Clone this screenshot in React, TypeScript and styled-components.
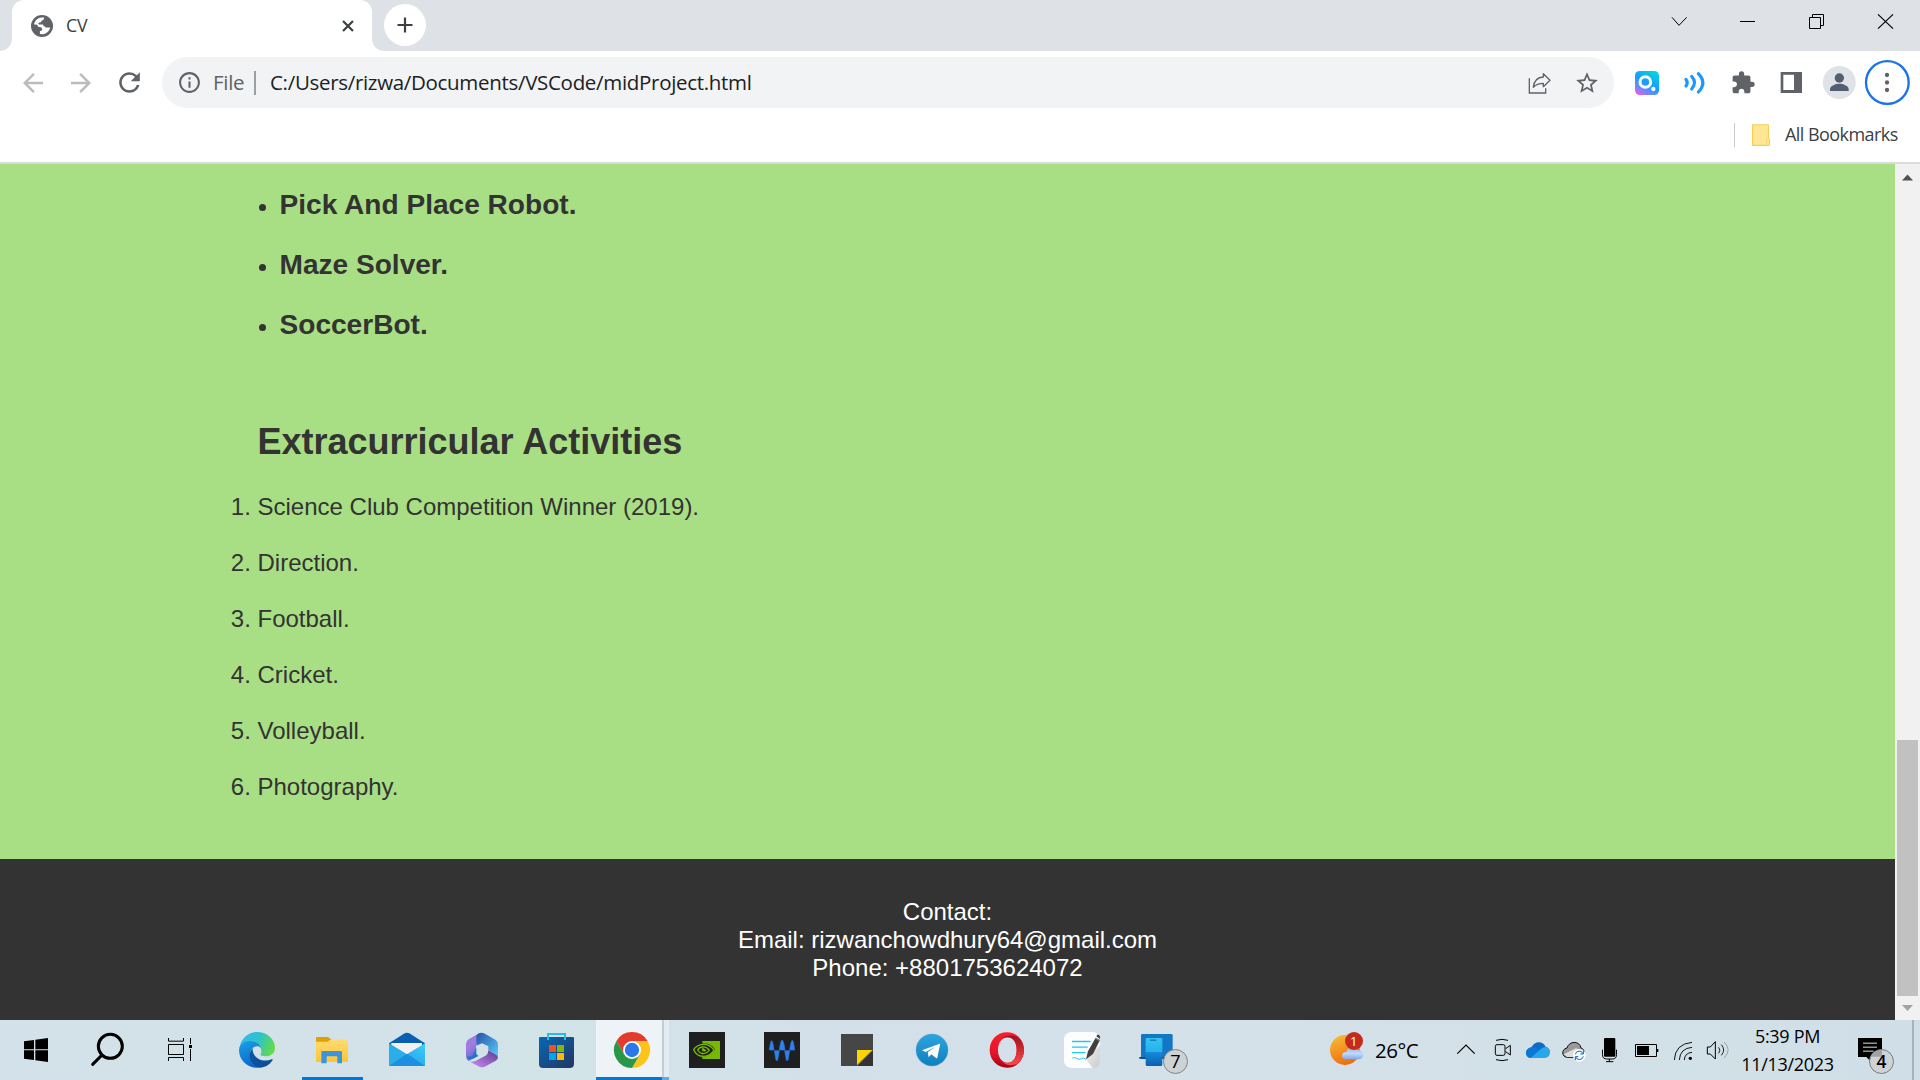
import React from "react";
import styled, { createGlobalStyle } from "styled-components";
import { MdArrowBack, MdArrowForward, MdRefresh, MdInfoOutline, MdStarBorder, MdExtension } from "react-icons/md";

const GlobalStyle = createGlobalStyle`
  * { box-sizing: border-box; }
  body { margin: 0; overflow: hidden; }
  svg { display: block; flex: none; }
`;

const ui = `"Open Sans", "Noto Sans", sans-serif`;

const Screen = styled.div`
  width: 1920px;
  height: 1080px;
  display: flex;
  flex-direction: column;
  overflow: hidden;
  background: #fff;
`;

/* ---------- browser chrome ---------- */

const TabStrip = styled.header`
  height: 51px;
  display: flex;
  background: #dee1e6;
  font-family: ${ui};
`;
const TabCorner = styled.div<{ $side: "left" | "right" }>`
  width: 12px;
  height: 51px;
  background: radial-gradient(circle at ${(p) => (p.$side === "left" ? "0 0" : "12px 0")}, #dee1e6 11.5px, #fff 12.3px) bottom / 12px 12px no-repeat;
`;
const Tab = styled.div`
  width: 360px;
  height: 51px;
  padding: 0 17px 0 19px;
  display: flex;
  align-items: center;
  background: #fff;
  border-radius: 12px 12px 0 0;
`;
const TabTitle = styled.span`
  flex: 1;
  margin-left: 13px;
  padding-bottom: 1px;
  font-size: 17.8px;
  letter-spacing: -0.1px;
  color: #3c4043;
`;
const NewTab = styled.div`
  width: 42px;
  height: 42px;
  margin-top: 4px;
  border-radius: 50%;
  background: #fff;
  display: flex;
  align-items: center;
  justify-content: center;
`;
const WindowButtons = styled.div`
  margin-left: auto;
  display: flex;
`;

const Toolbar = styled.div`
  height: 64px;
  padding: 6px 10px 7px 18px;
  display: flex;
  align-items: center;
  font-family: ${ui};
`;
const NavButton = styled.div<{ $dim?: boolean }>`
  width: 48px;
  display: flex;
  color: ${(p) => (p.$dim ? "#babcbe" : "#5f6368")};
`;
const Omnibox = styled.div`
  width: 1452px;
  height: 51px;
  padding: 0 14px 0 15px;
  display: flex;
  align-items: center;
  background: #f1f3f4;
  border-radius: 26px;
  color: #5f6368;
`;
const Scheme = styled.span`
  width: 41px;
  margin-left: 11px;
  padding-bottom: 2px;
  font-size: 20.5px;
  letter-spacing: -0.3px;
  white-space: nowrap;
`;
const Divider = styled.i<{ $color: string; $gap?: number; $width?: number }>`
  width: ${(p) => p.$width ?? 2}px;
  height: 24px;
  margin-right: ${(p) => p.$gap ?? 0}px;
  background: ${(p) => p.$color};
`;
const Address = styled.span`
  flex: 1;
  margin-left: 14px;
  padding-bottom: 2px;
  font-size: 20.5px;
  letter-spacing: -0.31px;
  color: #202124;
  white-space: nowrap;
`;
const OmniboxActions = styled.div`
  display: flex;
  align-items: center;
  gap: 22px;
`;
const Extensions = styled.div`
  width: 290px;
  margin: -6px 0 -7px auto;
`;
const BookmarkBar = styled.div`
  height: 49px;
  padding: 0 18px 8px 0;
  border-bottom: 2px solid #dadbdd;
  display: flex;
  align-items: center;
  justify-content: flex-end;
  font-family: ${ui};
`;
const BookmarkLabel = styled.span`
  width: 117px;
  margin-left: 14px;
  padding-bottom: 2px;
  font-size: 18px;
  letter-spacing: -0.55px;
  color: #3c4043;
  white-space: nowrap;
`;

/* ---------- page ---------- */

const Viewport = styled.div`
  height: 856px;
  display: flex;
`;
const Page = styled.main`
  width: 1895px;
  display: flex;
  flex-direction: column;
  background: #a9df84;
  color: #333;
  font-family: "Liberation Sans", Arial, sans-serif;
  font-size: 24px;
`;
const Resume = styled.section`
  height: 695px;
  padding: 25px 257.5px 0;
`;
const Projects = styled.ul`
  margin: 0;
  padding: 0 0 0 22px;
  list-style: disc;
`;
const Project = styled.li`
  height: 60px;
  line-height: 32px;
`;
const ProjectName = styled.h3`
  margin: 0;
  font-size: 28.08px;
  line-height: 32px;
`;
const Heading = styled.h2`
  margin: 52px 0 0;
  font-size: 36px;
  line-height: 42px;
`;
const Activities = styled.ol`
  margin: 30px 0 0;
  padding: 0;
`;
const Activity = styled.li`
  height: 56px;
  line-height: 28px;
`;
const Contact = styled.footer`
  height: 161px;
  padding-top: 39px;
  background: #333;
  color: #fff;
  text-align: center;
  line-height: 28px;
`;
const Scrollbar = styled.div`
  width: 25px;
  display: flex;
  flex-direction: column;
  align-items: center;
  background: #f1f1f1;
`;
const Thumb = styled.div`
  width: 21px;
  height: 256px;
  margin-top: auto;
  background: #c1c1c1;
`;

/* ---------- taskbar ---------- */

const Taskbar = styled.nav`
  height: 60px;
  display: flex;
  background: linear-gradient(90deg, #d3e1ea 0, #d3e2e9 20%, #d2e4e8 29%, #d3e0e9 42%, #d5e1e9 60%, #d0dfe7 100%);
  font-family: ${ui};
  color: #000;
`;
const SystemButtons = styled.div`
  width: 219px;
  display: flex;
`;
const AppSlot = styled.div<{ $state?: "open" | "active" }>`
  width: 75px;
  height: 60px;
  padding: 12px 0 0 20px;
  background: ${(p) =>
    p.$state === "active"
      ? "linear-gradient(#0078d7, #0078d7) 2px 57px / 66px 3px no-repeat, linear-gradient(#62abe3, #62abe3) 68px 57px / 7px 3px no-repeat, linear-gradient(90deg, transparent 2px, #edf3f7 2px, #edf3f7 68px, #c3cfd6 68px, #c3cfd6 70px, #e3ecf1 70px)"
      : p.$state === "open"
        ? "linear-gradient(#0078d7, #0078d7) 8px 57px / 61px 3px no-repeat"
        : "none"};
`;
const Weather = styled.div`
  margin-left: auto;
  width: 119px;
  display: flex;
`;
const Temperature = styled.span`
  margin-left: 10px;
  font-size: 20.5px;
  line-height: 61px;
  letter-spacing: -0.5px;
`;
const Clock = styled.div`
  width: 103px;
  margin-right: 1px;
  padding-top: 2px;
  text-align: center;
  font-size: 18px;
  line-height: 28px;
  letter-spacing: -0.3px;
  white-space: nowrap;
`;
const ShowDesktop = styled.div`
  width: 8px;
  border-left: 2px solid #a7b2b9;
`;

type IconProps = { w: number; h: number; box: string; children: React.ReactNode };
const Icon = ({ w, h, box, children }: IconProps) => (
  <svg width={w} height={h} viewBox={box} fill="none">{children}</svg>
);
const AppIcon = ({ children }: { children: React.ReactNode }) => (
  <svg width="36" height="36" viewBox="0 0 108 108" overflow="visible" fill="none">{children}</svg>
);

const Globe = () => (
  <Icon w={22} h={22} box="0 0 22 22">
    <circle cx="11" cy="11" r="11" fill="#5f6368" />
    <path d="M3 9.500C3.800 5.500 7 2.800 10.700 2.600h2.300c0 1.800-.4 2.500-1.800 2.900-.8.2-.7 1.200-1.400 1.700-.8.5-1.800.2-2.300.9-.5.8.1 1.600 1.100 1.500h2.600c1 0 1.400.6 1.500 1.600.9.1 1.700.4 1.800 1.300h4.700c-.7 3.600-3.600 6.300-7.200 6.700l-3.100-.1v-3.200c1.400.1 2.400-.4 2.300-1.600-.1-1.500-1.300-2.200-2.900-2.200-1.700 0-1.600-2.300-3.100-2.500z" fill="#fff" />
  </Icon>
);

const WindowControls = () => (
  <Icon w={260} h={51} box="540 0 780 153">
    <g stroke="#000" strokeWidth="3">
      <path d="M576 52l21 24 23-24" />
      <path d="M780 64.500h45" />
      <path d="M988.500 52.500h33v33h-33zM997.500 52v-8.500h33v33H1023" />
      <path d="M1194 43l45 43M1239 43l-45 43" strokeWidth="3.600" />
    </g>
  </Icon>
);

const ToolbarExtensions = () => (
  <Icon w={290} h={64} box="420 153 870 192">
    <defs>
      <linearGradient id="ext" x1=".8" y1="0" x2=".2" y2="1">
        <stop stopColor="#00d8dc" /><stop offset=".5" stopColor="#189cff" /><stop offset=".75" stopColor="#5f8dff" /><stop offset="1" stopColor="#e35cf5" />
      </linearGradient>
    </defs>
    <rect x="465" y="213" width="72" height="72" rx="14" fill="url(#ext)" />
    <circle cx="496" cy="246" r="16" stroke="#fff" strokeWidth="9" />
    <circle cx="520" cy="267" r="6.500" fill="#fff" />
    <g stroke="#1a98ff" strokeWidth="9.500" strokeLinecap="round">
      <path d="M618 238q7 10 0 20M635 229q17 18 0 38M655 221q27 28 0 55" />
    </g>
    <path d="M902 216h64v63h-64zM910 224v46h32v-46z" fillRule="evenodd" fill="#5f6368" />
    <circle cx="1078" cy="247.500" r="49.500" fill="#dfe2e7" />
    <circle cx="1078" cy="234" r="14" fill="#535e70" />
    <path d="M1050 273v-6c0-10 18-16 28-16s28 6 28 16v6z" fill="#535e70" />
    <circle cx="1222" cy="247.500" r="64" stroke="#1a73e8" strokeWidth="7" />
    <g fill="#5f6368"><circle cx="1221" cy="225" r="6.500" /><circle cx="1221" cy="247.500" r="6.500" /><circle cx="1221" cy="270" r="6.500" /></g>
    <g transform="translate(751.500 210.500) scale(3.150)" color="#5f6368"><MdExtension size={24} /></g>
  </Icon>
);

const ShareIcon = () => (
  <Icon w={24} h={24} box="144 213 72 72">
    <path d="M148 235v44h49v-14" stroke="#5f6368" strokeWidth="4" />
    <path d="M160 262c2-20 11-30 30-31v-10l20 20-20 19v-10c-13 0-22 3-30 12z" stroke="#5f6368" strokeWidth="4" strokeLinejoin="round" />
  </Icon>
);

const FolderIcon = () => (
  <Icon w={20} h={24} box="813 369 60 72">
    <path d="M816 373h48q3 0 3 3v40h3v18q0 4-4 4h-50z" fill="#f5cf55" />
    <path d="M819 376h45v38l-6 3v17h-39z" fill="#ffe695" />
    <path d="M860 434v-16q4-5 7 0v16z" fill="#ffe695" />
  </Icon>
);

const systemIcons = (
  <>
    <Icon w={72} h={60} box="0 30 216 180">
      <path d="M72 94l30-4v28H72zM106 89l38-5v34h-38zM72 121h30v29l-30-4zM106 121h38v35l-38-5z" fill="#000" />
    </Icon>
    <Icon w={72} h={60} box="216 30 216 180">
      <circle cx="331" cy="109" r="36" stroke="#000" strokeWidth="9" />
      <path d="M306 135l-28 28" stroke="#000" strokeWidth="9" strokeLinecap="round" />
    </Icon>
    <Icon w={72} h={60} box="432 30 216 180">
      <path d="M505.500 84v9.500h45V84M505.500 103.500h45v30h-45zM505.500 153v-10.500h45V153M571.500 84v18M571.500 117v36" stroke="#000" strokeWidth="3" />
      <path d="M567 105h9v9h-9z" fill="#000" />
    </Icon>
  </>
);

const EdgeIcon = () => (
  <AppIcon>
    <defs>
      <linearGradient id="eg1" x1="0" y1=".3" x2="1" y2=".6"><stop stopColor="#31b9f0" /><stop offset=".5" stopColor="#2fc3c9" /><stop offset="1" stopColor="#66dc42" /></linearGradient>
      <linearGradient id="eg2" x1=".2" y1="0" x2=".6" y2="1"><stop stopColor="#1b9de2" /><stop offset="1" stopColor="#0a63c9" /></linearGradient>
      <linearGradient id="eg3" x1="0" y1="0" x2="1" y2="1"><stop stopColor="#0d59a8" /><stop offset="1" stopColor="#0c4a94" /></linearGradient>
    </defs>
    <path d="M1 50C5 20 27 0 54 0c32 0 54 23 54 47 0 18-14 26-29 26-12 0-16-4-14-8 4-5 3-18-7-24C41 28 12 30 1 50z" fill="url(#eg1)" />
    <path d="M0 54C2 34 20 26 34 27c15 1 27 7 31 20-10-9-28-3-31 14-4 26 15 42 36 45C31 114 0 88 0 54z" fill="url(#eg2)" />
    <path d="M44 46c-18 14-17 45 11 59 21 5 36-6 46-21 1-2-1-3-3-2-27 11-56-4-57-29 0-3 1-5 3-7z" fill="url(#eg3)" />
  </AppIcon>
);

const ExplorerIcon = () => (
  <AppIcon>
    <defs><linearGradient id="fx" x1="0" y1="0" x2="0" y2="1"><stop stopColor="#ffdb72" /><stop offset="1" stopColor="#fdc534" /></linearGradient></defs>
    <path d="M6 18q0-3 3-3h31q3 0 6 3l6 5v10H6z" fill="#e0a000" />
    <path d="M6 29h34l12-7h46q4 0 4 4v60q0 4-4 4H10q-4 0-4-4z" fill="url(#fx)" />
    <path d="M22 94V61q0-4 4-4h54q4 0 4 4v33H70V75q0-2-2-2H40q-2 0-2 2v19z" fill="#3b94dc" />
  </AppIcon>
);

const MailIcon = () => (
  <AppIcon>
    <defs><linearGradient id="ml" x1="1" y1="0" x2="0" y2="1"><stop stopColor="#3fd0fa" /><stop offset="1" stopColor="#1c8ee0" /></linearGradient></defs>
    <path d="M0 34L47 4q7-4 14 0l47 30v30H0z" fill="#0a5fb0" />
    <path d="M7 33h92v14L58 70 7 44z" fill="#f2f2f2" />
    <path d="M0 34l54 33-54 35z" fill="#2badea" />
    <path d="M108 34v68H0l36-25z" fill="url(#ml)" />
    <path d="M0 102l54-37 54 37z" fill="#1b8fe2" />
  </AppIcon>
);

const OfficeIcon = () => (
  <AppIcon>
    <defs>
      <linearGradient id="of1" x1="0" y1="0" x2=".4" y2="1"><stop stopColor="#8c7fe0" /><stop offset=".5" stopColor="#a47ce0" /><stop offset="1" stopColor="#5a6ad4" /></linearGradient>
      <linearGradient id="of2" x1="0" y1="0" x2="1" y2="1"><stop stopColor="#2a4fa8" /><stop offset="1" stopColor="#55d0fa" /></linearGradient>
      <linearGradient id="of3" x1="1" y1="0" x2="0" y2="1"><stop stopColor="#593a91" /><stop offset="1" stopColor="#cf90f2" /></linearGradient>
    </defs>
    <path d="M47 3L14 22Q6 27 6 36v37q0 9 8 14l26-14q-4-3-4-8V40q0-5 4-8l12-8z" fill="url(#of1)" />
    <path d="M47 3q7-2 13 1l34 19q8 5 8 13v40q-3-8-10-11L73 54V43L54 34 37 41V16Q37 6 47 3z" fill="url(#of2)" />
    <path d="M73 55l20 11q9 5 9 11-1 6-8 10l-32 17q-8 4-16 0L18 89q15 1 22-5l27-14q6-4 6-15z" fill="url(#of3)" />
    <path d="M7 75q6 8 20 5l16-8-6-7V47L25 72z" fill="#2476bf" />
  </AppIcon>
);

const StoreIcon = () => (
  <AppIcon>
    <defs><linearGradient id="st" x1="0" y1="0" x2="1" y2="1"><stop stopColor="#0867b5" /><stop offset="1" stopColor="#24365f" /></linearGradient></defs>
    <path d="M0 19q0-4 4-4h97q4 0 4 4v76q0 13-13 13H12Q0 108 0 96z" fill="url(#st)" />
    <path d="M27 24V6h51v18" stroke="#25bdf0" strokeWidth="6" />
    <path d="M30 39h21v21H30z" fill="#f25022" /><path d="M54 39h21v21H54z" fill="#7fba00" />
    <path d="M30 63h21v21H30z" fill="#00a4ef" /><path d="M54 63h21v21H54z" fill="#ffb900" />
  </AppIcon>
);

const ChromeIcon = () => (
  <AppIcon>
    <path d="M7.200 27a54 54 0 0 1 93.600 0H54L30.600 67.500z" fill="#e33b2e" />
    <path d="M100.800 27A54 54 0 0 1 54 108l23.400-40.500L54 27z" fill="#fcc419" />
    <path d="M54 108A54 54 0 0 1 7.200 27l23.400 40.500h46.800z" fill="#279847" />
    <circle cx="54" cy="54" r="27" fill="#fff" />
    <circle cx="54" cy="54" r="21.500" fill="#2b79e8" />
  </AppIcon>
);

const NvidiaIcon = () => (
  <AppIcon>
    <path d="M0 0h108v108H0z" fill="#1f1f1f" />
    <path d="M40 27h53v54H40z" fill="#77b900" />
    <path d="M40 34c18-2 31 8 38 18-8 13-23 23-38 22z" fill="#1f1f1f" />
    <path d="M40 37c-13 2-22 9-26 16 5 12 17 20 30 20 14-1 24-8 31-19C66 42 54 35 40 37z" stroke="#77b900" strokeWidth="4" />
    <path d="M41 45c-8 1-13 5-15 9 4 7 11 11 18 11 8-1 13-5 17-10-5-7-13-11-20-10z" stroke="#77b900" strokeWidth="4" />
    <path d="M40 47c8 2 9 8 13 8-4 5-9 4-14 1z" fill="#77b900" />
  </AppIcon>
);

const WaveIcon = () => (
  <AppIcon>
    <path d="M0 0h108v108H0z" fill="#1f1f1f" />
    <path d="M16 54q7-56 14 0zM31 56h15l-5 29h-5zM46 54q8-60 17 0zM62 56h15l-5 29h-5zM77 54q8-58 15 0z" fill="#2b82f0" stroke="#2b74de" strokeWidth="2" />
  </AppIcon>
);

const NotesIcon = () => (
  <AppIcon>
    <path d="M6 6h96v48L54 102H6z" fill="#464646" /><path d="M54 102l48-48v48z" fill="#333" />
    <path d="M54 54h46l-46 45z" fill="#ffd500" />
  </AppIcon>
);

const TelegramIcon = () => (
  <AppIcon>
    <defs><linearGradient id="tg" x1="0" y1="0" x2="0" y2="1"><stop stopColor="#2ba5e0" /><stop offset="1" stopColor="#0f7fbd" /></linearGradient></defs>
    <circle cx="54" cy="54" r="48" fill="url(#tg)" stroke="#5c9bbd" strokeWidth="1.500" />
    <path d="M24 55l53-20q2 0 1 3l-8 39q-1 3-4 1L52 67l-8 9-3-15 24-17-30 16z" fill="#fff" />
  </AppIcon>
);

const OperaIcon = () => (
  <AppIcon>
    <defs>
      <linearGradient id="op1" x1="0" y1="0" x2="0" y2="1"><stop stopColor="#ff1b2d" /><stop offset=".6" stopColor="#e3152a" /><stop offset="1" stopColor="#a70014" /></linearGradient>
      <linearGradient id="op2" x1="0" y1="0" x2="0" y2="1"><stop stopColor="#a0101c" /><stop offset="1" stopColor="#ff4b4b" /></linearGradient>
    </defs>
    <path d="M54 1c29 0 51 23 51 53s-22 53-51 53S2 84 2 54 25 1 54 1zm2 15C38 16 27 33 27 54s11 38 29 38 27-17 27-38-9-38-27-38z" fillRule="evenodd" fill="url(#op1)" />
    <path d="M37 22c12-13 30-13 44-9 14 9 24 23 24 41 0 19-9 33-23 43-14 4-33 5-44-10 6 5 12 7 18 6 17-2 27-17 27-39S73 17 56 16c-7 0-13 2-19 6z" fill="url(#op2)" />
  </AppIcon>
);

const JournalIcon = () => (
  <AppIcon>
    <defs><linearGradient id="jn" x1="0" y1="0" x2="1" y2="1"><stop stopColor="#eee" /><stop offset="1" stopColor="#ccc" /></linearGradient></defs>
    <rect width="108" height="108" rx="22" fill="#fdfdfd" />
    <path d="M66 82l42-43v47q0 22-22 22z" fill="url(#jn)" />
    <path d="M24 28.500h56M24 45.500h47M24 62h40" stroke="#19c9f5" strokeWidth="4" />
    <path d="M25 78q7-3 13 1 7 6 14 1t14 2" stroke="#19c9f5" strokeWidth="3" />
    <path d="M66 82l6-24 23-41 13 7-21 42z" fill="#404040" /><path d="M97 13q3-8 8-4 5 4 3 12z" fill="#404040" />
    <path d="M93 18l14 9" stroke="#aaa" strokeWidth="2" />
  </AppIcon>
);

const PhoneIcon = () => (
  <AppIcon>
    <defs><linearGradient id="ph" x1="0" y1="0" x2="0" y2="1"><stop stopColor="#35c3f2" /><stop offset=".5" stopColor="#27b0ea" /><stop offset=".51" stopColor="#1689da" /><stop offset="1" stopColor="#0e5fae" /></linearGradient></defs>
    <path d="M10 6h87q4 0 4 4v65H6V10q0-4 4-4z" fill="#1378c4" /><path d="M0 75h104v6H5q-5 0-5-6z" fill="#0c4f94" />
    <rect x="20" y="18" width="50" height="84" rx="4" fill="url(#ph)" /><path d="M33 24.500h19" stroke="#1679b0" strokeWidth="4" />
    <circle cx="109.500" cy="88.500" r="36" fill="#cdd2d5" stroke="#7f8487" strokeWidth="3" />
    <text x="109.500" y="108" textAnchor="middle" fontFamily="Open Sans" fontSize="54" fontWeight="500" fill="#000">7</text>
  </AppIcon>
);

const WeatherIcon = () => (
  <Icon w={36} h={60} box="87 30 108 180">
    <defs>
      <linearGradient id="sun" x1=".2" y1="0" x2=".6" y2="1"><stop stopColor="#f5bd32" /><stop offset="1" stopColor="#f0690f" /></linearGradient>
      <linearGradient id="cl" x1="0" y1="0" x2="0" y2="1"><stop stopColor="#8bb4ee" /><stop offset=".5" stopColor="#c2daf9" /><stop offset="1" stopColor="#84a8e6" /></linearGradient>
    </defs>
    <circle cx="135" cy="120" r="45" fill="url(#sun)" />
    <path d="M139 148c-17 0-17-22 0-23 4-15 27-16 32-5 24-2 24 28 4 28z" fill="url(#cl)" />
    <circle cx="162" cy="93" r="27" fill="#c42b1c" />
    <text x="161" y="107" textAnchor="middle" fontFamily="Open Sans" fontSize="39" fill="#fff">1</text>
  </Icon>
);

const trayIcons = (
  <>
    <Icon w={36} h={60} box="444 30 108 180"><path d="M472 131l26-26 26 26" stroke="#000" strokeWidth="3.500" /></Icon>
    <Icon w={36} h={60} box="552 30 108 180">
      <rect x="586" y="104" width="29" height="32" rx="5" stroke="#000" strokeWidth="3" />
      <path d="M617 116l14-10v29l-14-10M588 91q18-6 36 0M588 149q18 6 36 0" stroke="#000" strokeWidth="3" />
    </Icon>
    <Icon w={36} h={60} box="660 30 108 180">
      <path d="M678 128q2-14 17-17c8-18 33-20 42-1q12 3 13 17z" fill="#0f6cc4" />
      <path d="M692 144c-18 0-20-28 0-31 7-2 14-1 21 4l20 10-16 17z" fill="#0a78d4" />
      <path d="M692 144l33-29q5-3 12-4c17 2 18 33-3 33z" fill="#28a8ea" />
    </Icon>
    <Icon w={36} h={60} box="768 30 108 180">
      <path d="M802 142c-17 0-19-25-1-28 6-22 38-23 42 0 13 3 14 27-5 28z" fill="#999" stroke="#111" strokeWidth="3" />
      <path d="M791 133l38-19 10 12-20 15h-17z" fill="#ddd" />
      <circle cx="838" cy="136" r="19" fill="#fff" />
      <path d="M826 133a12 12 0 0 1 23-2M850 139a12 12 0 0 1-23 2M850 122v10h-9M826 150v-10h9" stroke="#0b68c3" strokeWidth="3" />
    </Icon>
    <Icon w={36} h={60} box="-24 60 108 180">
      <rect x="12" y="114" width="34" height="56" rx="3" fill="#000" />
      <path d="M7.500 149v15q0 13 13 13h17q12 0 12-13v-15M28 177v8M18 185h22" stroke="#000" strokeWidth="3" />
    </Icon>
    <Icon w={36} h={60} box="84 60 108 180">
      <path d="M106.500 133.500h63v36h-63z" stroke="#000" strokeWidth="3" /><path d="M111 138h36v27h-36zM170 147h5v9h-5z" fill="#000" />
    </Icon>
    <Icon w={36} h={60} box="192 60 108 180">
      <path d="M223 180q2-48 53-53M238 180q2-35 38-38M253 180q1-21 23-23" stroke="#111" strokeWidth="3" /><circle cx="271" cy="175" r="5" fill="#000" />
    </Icon>
    <Icon w={36} h={60} box="300 60 108 180">
      <path d="M322 141h9l15-16v52l-15-15h-9z" stroke="#000" strokeWidth="3" /><path d="M356 142q7 9 0 18M364 134q14 16 0 32" stroke="#222" strokeWidth="3" />
      <path d="M372 126q25 24 0 48" stroke="#9aa5ab" strokeWidth="3" />
    </Icon>
  </>
);

const NotificationIcon = () => (
  <Icon w={72} h={60} box="720 60 216 180">
    <path d="M774 114h72v57h-30v17l-17-17h-25z" fill="#000" />
    <path d="M789 129.500h42M789 141.500h42M789 153.500h32" stroke="#d3e1ea" strokeWidth="3" />
    <circle cx="844.500" cy="184.500" r="36" fill="#d0d3d5" stroke="#777b7e" strokeWidth="3" />
    <path d="M812 170q10-20 34-20v20z" fill="#a0a3a5" />
    <text x="844.500" y="203" textAnchor="middle" fontFamily="Open Sans" fontSize="52" fontWeight="600" fill="#000">4</text>
  </Icon>
);

const projects = ["Pick And Place Robot.", "Maze Solver.", "SoccerBot."];
const activities = ["Science Club Competition Winner (2019).", "Direction.", "Football.", "Cricket.", "Volleyball.", "Photography."];
const apps: { Art: React.FC; state?: "open" | "active" }[] = [
  { Art: EdgeIcon }, { Art: ExplorerIcon, state: "open" }, { Art: MailIcon }, { Art: OfficeIcon }, { Art: StoreIcon },
  { Art: ChromeIcon, state: "active" }, { Art: NvidiaIcon }, { Art: WaveIcon }, { Art: NotesIcon }, { Art: TelegramIcon },
  { Art: OperaIcon }, { Art: JournalIcon }, { Art: PhoneIcon },
];

export default function App() {
  return (
    <Screen>
      <GlobalStyle />
      <TabStrip>
        <TabCorner $side="left" />
        <Tab>
          <Globe />
          <TabTitle>CV</TabTitle>
          <Icon w={14} h={14} box="0 0 14 14"><path d="M2 2l10 10M12 2L2 12" stroke="#3c4043" strokeWidth="2.200" /></Icon>
        </Tab>
        <TabCorner $side="right" />
        <NewTab>
          <Icon w={16} h={16} box="0 0 16 16"><path d="M8 .5v15M.5 8h15" stroke="#3c4043" strokeWidth="2.200" /></Icon>
        </NewTab>
        <WindowButtons><WindowControls /></WindowButtons>
      </TabStrip>
      <Toolbar>
        <NavButton $dim><MdArrowBack size={30} /></NavButton>
        <NavButton $dim><MdArrowForward size={30} /></NavButton>
        <NavButton><MdRefresh size={31} /></NavButton>
        <Omnibox>
          <MdInfoOutline size={25} />
          <Scheme>File</Scheme>
          <Divider $color="#9aa0a6" />
          <Address>C:/Users/rizwa/Documents/VSCode/midProject.html</Address>
          <OmniboxActions>
            <ShareIcon />
            <MdStarBorder size={26} />
          </OmniboxActions>
        </Omnibox>
        <Extensions><ToolbarExtensions /></Extensions>
      </Toolbar>
      <BookmarkBar>
        <Divider $color="#c9cbce" $width={1} $gap={16} />
        <FolderIcon />
        <BookmarkLabel>All Bookmarks</BookmarkLabel>
      </BookmarkBar>
      <Viewport>
        <Page>
          <Resume>
            <Projects>
              {projects.map((p) => <Project key={p}><ProjectName>{p}</ProjectName></Project>)}
            </Projects>
            <Heading>Extracurricular Activities</Heading>
            <Activities>
              {activities.map((a) => <Activity key={a}>{a}</Activity>)}
            </Activities>
          </Resume>
          <Contact>
            Contact:<br />Email: rizwanchowdhury64@gmail.com<br />Phone: +8801753624072
          </Contact>
        </Page>
        <Scrollbar>
          <Icon w={25} h={25} box="0 0 25 25"><path d="M7 16.500l5.500-6 5.500 6z" fill="#505050" /></Icon>
          <Thumb />
          <Icon w={25} h={24} box="0 0 25 24"><path d="M7 9l5.500 6L18 9z" fill="#a3a3a3" /></Icon>
        </Scrollbar>
      </Viewport>
      <Taskbar>
        <SystemButtons>{systemIcons}</SystemButtons>
        {apps.map(({ Art, state }, i) => <AppSlot key={i} $state={state}><Art /></AppSlot>)}
        <Weather>
          <WeatherIcon />
          <Temperature>26°C</Temperature>
        </Weather>
        {trayIcons}
        <Clock>5:39 PM<br />11/13/2023</Clock>
        <NotificationIcon />
        <ShowDesktop />
      </Taskbar>
    </Screen>
  );
}
